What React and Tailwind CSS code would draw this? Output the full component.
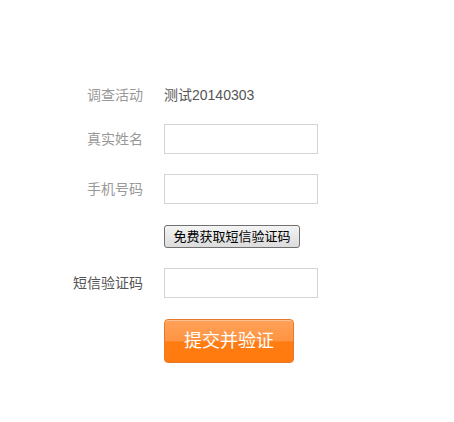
export default function App() {
    const font = { fontFamily: '"Liberation Sans", "Noto Sans CJK SC", sans-serif' };
    return (
        <div className="w-[454px] h-[422px] bg-white" style={font}>
            <div className="flex flex-col pt-[85px]">
                <div className="flex items-center h-[20px]">
                    <div className="w-[143px] text-right text-[14px] text-[#999]">调查活动</div>
                    <div className="ml-[21px] text-[14px] text-[#555]">测试20140303</div>
                </div>
                <div className="flex items-center mt-[19px]">
                    <label className="w-[143px] text-right text-[14px] text-[#999]">真实姓名</label>
                    <input type="text" className="ml-[21px] w-[154px] h-[30px] border border-[#d4d4d4] outline-none px-2" />
                </div>
                <div className="flex items-center mt-[20px]">
                    <label className="w-[143px] text-right text-[14px] text-[#999]">手机号码</label>
                    <input type="text" className="ml-[21px] w-[154px] h-[30px] border border-[#d4d4d4] outline-none px-2" />
                </div>
                <div className="flex mt-[21px] pl-[164px]">
                    <button className="w-[136px] h-[23px] rounded-[3px] border border-[#707070] bg-gradient-to-b from-[#f4f4f4] to-[#dcdcdc] text-[13px] text-black leading-none">
                        免费获取短信验证码
                    </button>
                </div>
                <div className="flex items-center mt-[20px]">
                    <label className="w-[143px] text-right text-[14px] text-[#555]">短信验证码</label>
                    <input type="text" className="ml-[21px] w-[154px] h-[30px] border border-[#d4d4d4] outline-none px-2" />
                </div>
                <div className="flex mt-[21px] pl-[164px]">
                    <button className="w-[130px] h-[44px] rounded-[4px] border border-[#e8782a] bg-[linear-gradient(to_bottom,#ffa159_0%,#ff9442_50%,#ff7c12_52%,#ff7a0e_100%)] text-white text-[18px] shadow-[inset_0_1px_0_rgba(255,255,255,0.35)]">
                        提交并验证
                    </button>
                </div>
            </div>
        </div>
    );
}
